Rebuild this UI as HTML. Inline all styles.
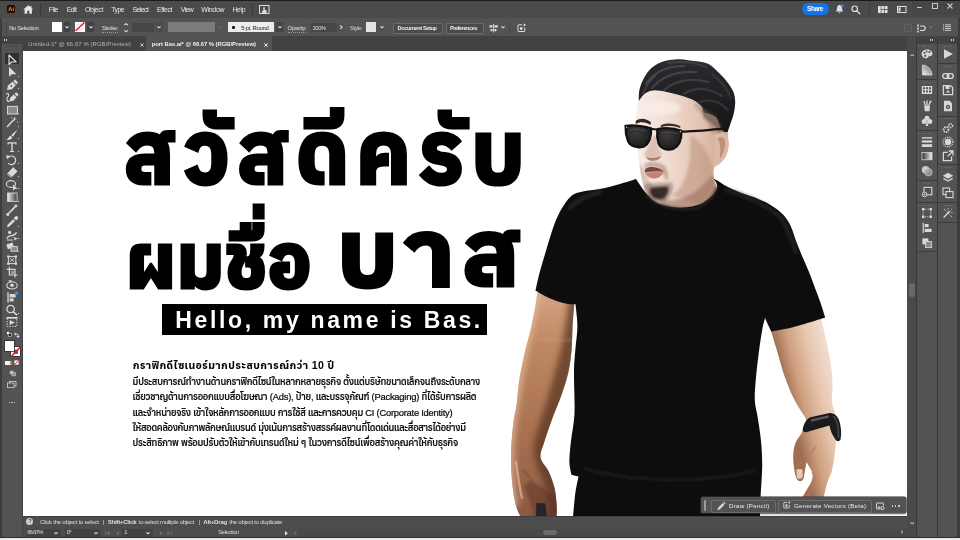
<!DOCTYPE html>
<html lang="th">
<head>
<meta charset="utf-8">
<title>port Bas.ai* @ 66.67 % (RGB/Preview)</title>
<style>
html,body{margin:0;padding:0;background:#535353;}
body{width:960px;height:540px;overflow:hidden;position:relative;font-family:"Liberation Sans","Anuphan","IBM Plex Sans Thai","Noto Sans Thai","Loma",sans-serif;}
#app{position:absolute;left:0;top:0;width:960px;height:540px;overflow:hidden;background:#535353;will-change:transform;}
.abs{position:absolute;}
#menubar{left:0;top:0;width:960px;height:18.4px;background:#4a4a4a;}
#ctrl{left:0;top:18.4px;width:960px;height:18px;background:#535353;}
#tabs{left:0;top:36.4px;width:960px;height:14.6px;background:#424242;}
#tools{left:0;top:37px;width:23px;height:503px;background:#535353;}
#canvas{left:23px;top:51px;width:884px;height:465px;background:#fff;overflow:hidden;}
#status{left:23px;top:516px;width:894px;height:24px;background:#4d4d4d;}
#rpanel{left:907px;top:37px;width:53px;height:503px;background:#4a4a4a;}
.ui{font-family:"Liberation Sans",sans-serif;color:#dcdcdc;white-space:pre;}
.th{font-family:"Liberation Sans","Anuphan","IBM Plex Sans Thai","Noto Sans Thai","Loma",sans-serif;color:#000;white-space:nowrap;}
.bd{font-size:9.4px;line-height:15px;font-weight:500;color:#0a0a0a;-webkit-text-stroke:0.22px #0a0a0a;}
.h1{font-weight:700;-webkit-text-stroke:3px #000;}
svg{display:block;overflow:visible;}
</style>
</head>
<body>
<div id="app">
<div id="menubar" class="abs">
<div class="abs" style="left:0px;top:0px;width:960px;height:1.3px;background:#1c1c1c;"></div>
<div class="abs" style="left:7px;top:5.3px;width:8.3px;height:7.6px;background:#2b0a02;border-radius:1.5px;"></div>
<div class="abs ui" style="left:8.3px;top:5.7px;font-size:5.6px;line-height:7.0px;font-weight:700;color:#ff9a1f;letter-spacing:0.106px;">Ai</div>
<svg class="abs" style="left:22.5px;top:4.6px;" width="10.5" height="9" viewBox="0 0 21 18"><path fill="#e6e6e6" d="M10.5,0.5 L0.5,9 H3.2 V17.5 H8.4 V11.5 H12.6 V17.5 H17.8 V9 H20.5 L17,6 V1.8 H14.6 V4 Z"/></svg>
<div class="abs" style="left:40px;top:3px;width:1px;height:12px;background:#3a3a3a;"></div>
<div class="abs ui" style="left:48.8px;top:5.7px;font-size:6.9px;line-height:8.62px;font-weight:400;color:#e8e8e8;letter-spacing:-0.536px;">File</div>
<div class="abs ui" style="left:66.7px;top:5.7px;font-size:6.9px;line-height:8.62px;font-weight:400;color:#e8e8e8;letter-spacing:-0.525px;">Edit</div>
<div class="abs ui" style="left:85.0px;top:5.7px;font-size:6.9px;line-height:8.62px;font-weight:400;color:#e8e8e8;letter-spacing:-0.324px;">Object</div>
<div class="abs ui" style="left:111.3px;top:5.7px;font-size:6.9px;line-height:8.62px;font-weight:400;color:#e8e8e8;letter-spacing:-0.518px;">Type</div>
<div class="abs ui" style="left:132.5px;top:5.7px;font-size:6.9px;line-height:8.62px;font-weight:400;color:#e8e8e8;letter-spacing:-0.571px;">Select</div>
<div class="abs ui" style="left:157.0px;top:5.7px;font-size:6.9px;line-height:8.62px;font-weight:400;color:#e8e8e8;letter-spacing:-0.4px;">Effect</div>
<div class="abs ui" style="left:180.8px;top:5.7px;font-size:6.9px;line-height:8.62px;font-weight:400;color:#e8e8e8;letter-spacing:-0.604px;">View</div>
<div class="abs ui" style="left:201.3px;top:5.7px;font-size:6.9px;line-height:8.62px;font-weight:400;color:#e8e8e8;letter-spacing:-0.263px;">Window</div>
<div class="abs ui" style="left:232.5px;top:5.7px;font-size:6.9px;line-height:8.62px;font-weight:400;color:#e8e8e8;letter-spacing:-0.391px;">Help</div>
<div class="abs" style="left:251.7px;top:3px;width:1px;height:12px;background:#3a3a3a;"></div>
<svg class="abs" style="left:259.0px;top:4.6px;" width="10.5" height="9" viewBox="0 0 21 18"><rect x="1" y="1" width="19" height="16" fill="none" stroke="#dcdcdc" stroke-width="2"/><path fill="#dcdcdc" d="M8.5,4.5 h3 v5 l3.5,1 v7 h-7.5 l-2.5,-5.5 l3.5,-0.5 z"/></svg>
<div class="abs" style="left:802px;top:2.8px;width:27px;height:12.6px;background:#1473e6;border-radius:6.5px;"></div>
<div class="abs ui" style="left:807.0px;top:5.1px;font-size:6.6px;line-height:8.25px;font-weight:700;color:#ffffff;letter-spacing:-0.482px;">Share</div>
<svg class="abs" style="left:834.5px;top:4.0px;" width="9" height="10" viewBox="0 0 18 20"><path fill="#e0e0e0" d="M9,2 C5,2 4,6 4,9 C4,12 2.5,13.5 1.5,15 H16.5 C15.5,13.5 14,12 14,9 C14,6 13,2 9,2 Z M7,16.5 h4 a2,2 0 0 1 -4,0 z"/><circle cx="14.5" cy="3.5" r="3" fill="#2d8ceb"/></svg>
<svg class="abs" style="left:850.5px;top:4.5px;" width="9.5" height="9.5" viewBox="0 0 19 19"><circle cx="7.5" cy="7.5" r="5.5" fill="none" stroke="#e0e0e0" stroke-width="2.4"/><path d="M11.5,11.5 L17.5,17.5" stroke="#e0e0e0" stroke-width="2.6" stroke-linecap="round"/></svg>
<div class="abs" style="left:868.5px;top:3px;width:1px;height:12px;background:#3e3e3e;"></div>
<svg class="abs" style="left:878.0px;top:5.7px;" width="9.5" height="7" viewBox="0 0 19 14"><rect x="0" y="0" width="5.5" height="14" fill="#e0e0e0"/><rect x="6.8" y="0" width="5.5" height="6.3" fill="#e0e0e0"/><rect x="6.8" y="7.7" width="5.5" height="6.3" fill="#e0e0e0"/><rect x="13.5" y="0" width="5.5" height="6.3" fill="#e0e0e0"/><rect x="13.5" y="7.7" width="5.5" height="6.3" fill="#e0e0e0"/></svg>
<svg class="abs" style="left:897.0px;top:5.7px;" width="9.5" height="7" viewBox="0 0 19 14"><rect x="1" y="1" width="17" height="12" fill="none" stroke="#e0e0e0" stroke-width="2"/><rect x="3" y="3" width="4" height="8" fill="#e0e0e0"/></svg>
<div class="abs" style="left:912px;top:1px;width:48px;height:14px;background:#464646;"></div>
<div class="abs" style="left:916.5px;top:7px;width:5px;height:1.2px;background:#c8c8c8;"></div>
<div class="abs" style="left:931.5px;top:3.4px;width:4.6px;height:3.8px;border:1.1px solid #c8c8c8;"></div>
<svg class="abs" style="left:946.5px;top:3.2px;" width="6" height="6" viewBox="0 0 12 12"><path d="M1,1 L11,11 M11,1 L1,11" stroke="#c8c8c8" stroke-width="2.2"/></svg>
</div>
<div id="ctrl" class="abs"><div class="abs" style="left:0;top:0.6px;">
<div class="abs" style="left:0px;top:-0.6px;width:2px;height:18.6px;background:#3c3c3c;"></div>
<div class="abs" style="left:958px;top:-0.6px;width:2px;height:18.6px;background:#3c3c3c;"></div>
<div class="abs" style="left:5.5px;top:3.5px;width:1px;height:11px;border-left:1px dotted #3a3a3a;"></div>
<div class="abs ui" style="left:9.2px;top:6.0px;font-size:5.9px;line-height:7.38px;font-weight:400;color:#e0e0e0;letter-spacing:-0.355px;">No Selection</div>
<div class="abs" style="left:52px;top:3.5px;width:10px;height:9.5px;background:#ffffff;"></div>
<div class="abs" style="left:63.7px;top:3.5px;width:6.6px;height:9.5px;background:#434343;"></div>
<svg class="abs" style="left:65.0px;top:6.7px;" width="4" height="2.4" viewBox="0 0 4 2.4"><path d="M0.4,0.4 L2.0,1.7999999999999998 L3.6,0.4" fill="none" stroke="#e0e0e0" stroke-width="1.1"/></svg>
<div class="abs" style="left:75.3px;top:3.5px;width:10px;height:9.5px;background:#ffffff;"></div>
<svg class="abs" style="left:75.3px;top:3.5px" width="10" height="9.5" viewBox="0 0 10 9.5"><rect x="2.2" y="2.2" width="5.6" height="5.1" fill="none" stroke="#d8d8d8" stroke-width="0.8"/><path d="M0.6,9 L9.4,0.5" stroke="#e0202a" stroke-width="1.5"/></svg>
<div class="abs" style="left:87.3px;top:3.5px;width:6.6px;height:9.5px;background:#434343;"></div>
<svg class="abs" style="left:88.6px;top:6.7px;" width="4" height="2.4" viewBox="0 0 4 2.4"><path d="M0.4,0.4 L2.0,1.7999999999999998 L3.6,0.4" fill="none" stroke="#e0e0e0" stroke-width="1.1"/></svg>
<div class="abs ui" style="left:102.0px;top:6.0px;font-size:5.9px;line-height:7.38px;font-weight:400;color:#e0e0e0;letter-spacing:-0.395px;border-bottom:0.6px dotted #9a9a9a;line-height:7px;margin-top:0.3px;">Stroke:</div>
<svg class="abs" style="left:124.3px;top:3.8px;" width="4.2" height="2.4" viewBox="0 0 4.2 2.4"><path d="M0.4,2.0 L2.1,0.6 L3.8000000000000003,2.0" fill="none" stroke="#e0e0e0" stroke-width="1.1"/></svg>
<svg class="abs" style="left:124.3px;top:10.6px;" width="4.2" height="2.4" viewBox="0 0 4.2 2.4"><path d="M0.4,0.4 L2.1,1.7999999999999998 L3.8000000000000003,0.4" fill="none" stroke="#e0e0e0" stroke-width="1.1"/></svg>
<div class="abs" style="left:131.7px;top:4.3px;width:22.5px;height:8.4px;background:#464646;"></div>
<div class="abs" style="left:155.8px;top:3.5px;width:7.5px;height:9.5px;background:#4b4b4b;"></div>
<svg class="abs" style="left:157.4px;top:6.9px;" width="4" height="2.4" viewBox="0 0 4 2.4"><path d="M0.4,0.4 L2.0,1.7999999999999998 L3.6,0.4" fill="none" stroke="#e0e0e0" stroke-width="1.1"/></svg>
<div class="abs" style="left:167.5px;top:3.5px;width:47.5px;height:10px;background:#7b7b7b;"></div>
<svg class="abs" style="left:218.3px;top:6.9px;" width="4" height="2.4" viewBox="0 0 4 2.4"><path d="M0.4,0.4 L2.0,1.7999999999999998 L3.6,0.4" fill="none" stroke="#6a6a6a" stroke-width="1.1"/></svg>
<div class="abs" style="left:228.3px;top:3.5px;width:46px;height:10px;background:#ebebeb;"></div>
<div class="abs" style="left:232.3px;top:7.3px;width:2.4px;height:2.4px;background:#111;border-radius:50%;"></div>
<div class="abs ui" style="left:241.3px;top:6.3px;font-size:5.9px;line-height:7.38px;font-weight:400;color:#1a1a1a;letter-spacing:-0.307px;">5 pt. Round</div>
<div class="abs" style="left:276.3px;top:3.5px;width:6.6px;height:9.5px;background:#434343;"></div>
<svg class="abs" style="left:277.6px;top:6.9px;" width="4" height="2.4" viewBox="0 0 4 2.4"><path d="M0.4,0.4 L2.0,1.7999999999999998 L3.6,0.4" fill="none" stroke="#e0e0e0" stroke-width="1.1"/></svg>
<div class="abs ui" style="left:287.5px;top:6.0px;font-size:5.9px;line-height:7.38px;font-weight:400;color:#e0e0e0;letter-spacing:-0.344px;border-bottom:0.6px dotted #9a9a9a;line-height:7px;margin-top:0.3px;">Opacity:</div>
<div class="abs" style="left:310.5px;top:4.3px;width:26px;height:8.4px;background:#464646;"></div>
<div class="abs ui" style="left:312.5px;top:5.8px;font-size:5.7px;line-height:7.12px;font-weight:400;color:#e0e0e0;letter-spacing:-0.349px;">100%</div>
<svg class="abs" style="left:340.0px;top:6.4px;" width="2.6" height="4.4" viewBox="0 0 2.6 4.4"><path d="M0.4,0.4 L2.0,2.2 L0.4,4.0" fill="none" stroke="#e0e0e0" stroke-width="1.1"/></svg>
<div class="abs ui" style="left:350.0px;top:5.6px;font-size:5.9px;line-height:7.38px;font-weight:400;color:#d8d8d8;letter-spacing:-0.447px;">Style:</div>
<div class="abs" style="left:366.3px;top:3.5px;width:10px;height:9.5px;background:#e4e4e4;"></div>
<svg class="abs" style="left:379.8px;top:6.9px;" width="4" height="2.4" viewBox="0 0 4 2.4"><path d="M0.4,0.4 L2.0,1.7999999999999998 L3.6,0.4" fill="none" stroke="#e0e0e0" stroke-width="1.1"/></svg>
<div class="abs" style="left:393px;top:4px;width:47.5px;height:8.6px;border:0.7px solid #6b6b6b;background:#4b4b4b;border-radius:1px;"></div>
<div class="abs ui" style="left:397.5px;top:5.9px;font-size:5.6px;line-height:7.0px;font-weight:700;color:#ececec;letter-spacing:-0.381px;">Document Setup</div>
<div class="abs" style="left:445.5px;top:4px;width:36.5px;height:8.6px;border:0.7px solid #6b6b6b;background:#4b4b4b;border-radius:1px;"></div>
<div class="abs ui" style="left:450.0px;top:5.9px;font-size:5.6px;line-height:7.0px;font-weight:700;color:#ececec;letter-spacing:-0.453px;">Preferences</div>
<svg class="abs" style="left:489.0px;top:4.6px;" width="9" height="8.5" viewBox="0 0 18 17"><rect x="8" y="0" width="1.6" height="17" fill="#e0e0e0"/><rect x="1" y="2.5" width="6" height="4.5" fill="#e0e0e0"/><rect x="10.6" y="2.5" width="7" height="4.5" fill="#e0e0e0"/><rect x="3" y="10" width="4" height="4.5" fill="#e0e0e0"/><rect x="10.6" y="10" width="4" height="4.5" fill="#e0e0e0"/></svg>
<svg class="abs" style="left:500.5px;top:7.2px;" width="4" height="2.4" viewBox="0 0 4 2.4"><path d="M0.4,0.4 L2.0,1.7999999999999998 L3.6,0.4" fill="none" stroke="#e0e0e0" stroke-width="1.1"/></svg>
<div class="abs" style="left:508.7px;top:3px;width:1px;height:12px;background:#444;"></div>
<svg class="abs" style="left:517.0px;top:4.0px;" width="9.5" height="9.5" viewBox="0 0 19 19"><path d="M10,3.5 H3.5 a1.5,1.5 0 0 0 -1.5,1.5 V15.5 a1.5,1.5 0 0 0 1.5,1.5 H14 a1.5,1.5 0 0 0 1.5,-1.5 V9.5" fill="none" stroke="#e0e0e0" stroke-width="2"/><rect x="6" y="8.5" width="5" height="5" fill="#e0e0e0"/><path d="M15,0 L16.1,2.9 L19,4 L16.1,5.1 L15,8 L13.9,5.1 L11,4 L13.9,2.9 Z" fill="#e0e0e0"/></svg>
<svg class="abs" style="left:903.5px;top:5.2px;" width="8" height="8" viewBox="0 0 16 16"><rect x="1.5" y="1.5" width="13" height="13" fill="none" stroke="#747474" stroke-width="2" stroke-dasharray="3 3"/></svg>
<svg class="abs" style="left:916.5px;top:4.6px;" width="9" height="9" viewBox="0 0 18 18"><rect x="0.5" y="1" width="3" height="4" fill="#e0e0e0"/><rect x="0.5" y="7" width="3" height="4" fill="#e0e0e0"/><rect x="0.5" y="13" width="3" height="4" fill="#e0e0e0"/><path d="M6,4 H12 a4.5,4.5 0 0 1 0,9 H6" fill="none" stroke="#e0e0e0" stroke-width="2.4"/></svg>
<svg class="abs" style="left:929.3px;top:7.3px;" width="3.6" height="2.2" viewBox="0 0 3.6 2.2"><path d="M0.4,0.4 L1.8,1.6 L3.2,0.4" fill="none" stroke="#7a7a7a" stroke-width="1.1"/></svg>
<svg class="abs" style="left:942.5px;top:5.5px;" width="8" height="7" viewBox="0 0 16 14"><rect x="0" y="0.5" width="2.2" height="2.2" fill="#bdbdbd"/><rect x="4" y="0.5" width="12" height="2.2" fill="#bdbdbd"/><rect x="0" y="4.2" width="2.2" height="2.2" fill="#bdbdbd"/><rect x="4" y="4.2" width="12" height="2.2" fill="#bdbdbd"/><rect x="0" y="7.9" width="2.2" height="2.2" fill="#bdbdbd"/><rect x="4" y="7.9" width="12" height="2.2" fill="#bdbdbd"/><rect x="0" y="11.6" width="2.2" height="2.2" fill="#bdbdbd"/><rect x="4" y="11.6" width="12" height="2.2" fill="#bdbdbd"/></svg>
</div></div>
<div id="tabs" class="abs"><div class="abs" style="left:0;top:0.6px;">
<div class="abs" style="left:0px;top:-0.6px;width:2px;height:15px;background:#3c3c3c;"></div>
<div class="abs ui" style="left:28.3px;top:4.0px;font-size:5.9px;line-height:7.38px;font-weight:400;color:#b4b4b4;letter-spacing:0.1px;">Untitled-1* @ 66.67 % (RGB/Preview)</div>
<svg class="abs" style="left:139.6px;top:5.7px;" width="4" height="4" viewBox="0 0 12 12"><path d="M1,1 L11,11 M11,1 L1,11" stroke="#c8c8c8" stroke-width="2.8"/></svg>
<div class="abs" style="left:145.7px;top:-0.6px;width:126px;height:15px;background:#535353;"></div>
<div class="abs ui" style="left:151.7px;top:4.0px;font-size:5.9px;line-height:7.38px;font-weight:700;color:#f0f0f0;letter-spacing:-0.047px;">port Bas.ai* @ 66.67 % (RGB/Preview)</div>
<svg class="abs" style="left:264.1px;top:5.7px;" width="4" height="4" viewBox="0 0 12 12"><path d="M1,1 L11,11 M11,1 L1,11" stroke="#f4f4f4" stroke-width="3.0"/></svg>
</div></div>
<div id="tools" class="abs">
<div class="abs" style="left:0px;top:0px;width:2px;height:503px;background:#3c3c3c;"></div>
<div class="abs" style="left:2px;top:0px;width:21px;height:6.5px;background:#424242;"></div>
<div class="abs" style="left:22px;top:0px;width:1px;height:503px;background:#424242;"></div>
<div class="abs" style="left:4.3px;top:2.2px;width:1.2px;height:1.6px;background:#d0d0d0;"></div>
<div class="abs" style="left:6.3px;top:2.2px;width:1.2px;height:1.6px;background:#d0d0d0;"></div>
<div class="abs" style="left:6px;top:8.6px;width:11px;height:0;border-top:1px dotted #3c3c3c;"></div>
<div class="abs" style="left:4.8px;top:16.3px;width:14.6px;height:11.2px;background:#2f2f2f;border-radius:1px;"></div>
<svg class="abs" style="left:5.0px;top:16.6px;" width="14" height="12" viewBox="0 0 14 12"><path d="M4,1 L4,10.5 L6.6,8 L11.2,8 Z" fill="none" stroke="#e4e4e4" stroke-width="1.1" stroke-linejoin="round"/></svg>
<svg class="abs" style="left:5.0px;top:29.1px;" width="14" height="12" viewBox="0 0 14 12"><path d="M4,0.8 L4,10.8 L6.8,8.2 L11.4,8.2 Z" fill="#dadada"/></svg><div class="abs" style="left:18.2px;top:38.7px;width:1.3px;height:1.3px;background:#cfcfcf;"></div>
<svg class="abs" style="left:5.0px;top:41.6px;" width="14" height="12" viewBox="0 0 14 12"><path d="M2,11 L3,6.5 L7.5,2.8 L10.8,6 L7,10.2 Z" fill="#dadada"/><path d="M8.3,2.2 L10.2,0.6 L13,3.4 L11.4,5.3 Z" fill="#dadada"/><circle cx="6.3" cy="7" r="0.9" fill="#535353"/></svg><div class="abs" style="left:18.2px;top:51.2px;width:1.3px;height:1.3px;background:#cfcfcf;"></div>
<svg class="abs" style="left:5.0px;top:54.1px;" width="14" height="12" viewBox="0 0 14 12"><path d="M4.5,10.5 L5.2,6.8 L8.8,3.4 L11.6,6.2 L8.4,9.8 Z" fill="#dadada"/><path d="M9.6,2.8 L11.2,1.2 L13.6,3.6 L12.2,5.4 Z" fill="#dadada"/><path d="M1.2,3 C3.5,1.5 4.5,4 2.8,6 C1.2,8 1.6,10.4 4.4,10.6" fill="none" stroke="#dadada" stroke-width="1.1"/></svg>
<svg class="abs" style="left:5.0px;top:66.6px;" width="14" height="12" viewBox="0 0 14 12"><rect x="2.5" y="2.4" width="10" height="7.6" fill="#8c8c8c" stroke="#d6d6d6" stroke-width="1"/></svg><div class="abs" style="left:18.2px;top:76.2px;width:1.3px;height:1.3px;background:#cfcfcf;"></div>
<svg class="abs" style="left:5.0px;top:79.1px;" width="14" height="12" viewBox="0 0 14 12"><path d="M2,11 L8.5,4" stroke="#dadada" stroke-width="1.5"/><path d="M9.5,0.5 L10.1,2.4 L12,3 L10.1,3.6 L9.5,5.5 L8.9,3.6 L7,3 L8.9,2.4 Z" fill="#dadada"/><rect x="12" y="5.5" width="1" height="1" fill="#dadada"/><rect x="5.8" y="1" width="1" height="1" fill="#dadada"/></svg><div class="abs" style="left:18.2px;top:88.7px;width:1.3px;height:1.3px;background:#cfcfcf;"></div>
<svg class="abs" style="left:5.0px;top:91.6px;" width="14" height="12" viewBox="0 0 14 12"><path d="M12.6,0.6 L6.2,6 L8,7.8 Z" fill="#dadada"/><path d="M5.6,6.8 L7.3,8.5 C6.8,10.6 4,11.4 1.6,10.8 C3.6,10 3.4,7.4 5.6,6.8 Z" fill="#dadada"/></svg><div class="abs" style="left:18.2px;top:101.2px;width:1.3px;height:1.3px;background:#cfcfcf;"></div>
<svg class="abs" style="left:5.0px;top:104.1px;" width="14" height="12" viewBox="0 0 14 12"><path d="M2.5,1.2 H11.5 V3.6 H10.4 V2.5 H7.7 V10 H9 V11 H5 V10 H6.3 V2.5 H3.6 V3.6 H2.5 Z" fill="#dadada"/></svg><div class="abs" style="left:18.2px;top:113.7px;width:1.3px;height:1.3px;background:#cfcfcf;"></div>
<svg class="abs" style="left:5.0px;top:116.6px;" width="14" height="12" viewBox="0 0 14 12"><path d="M3.2,3.4 A4.3,4.3 0 1 1 3,9" fill="none" stroke="#dadada" stroke-width="1.2"/><path d="M1,1.2 L5.4,2 L2.2,5.2 Z" fill="#dadada"/></svg><div class="abs" style="left:18.2px;top:126.2px;width:1.3px;height:1.3px;background:#cfcfcf;"></div>
<svg class="abs" style="left:5.0px;top:129.1px;" width="14" height="12" viewBox="0 0 14 12"><path d="M8.2,1.2 L12.6,5.2 L7,11 L2.6,7 Z" fill="#dadada"/><path d="M2.6,7 L7,11 L5.6,11.6 L1.6,8 Z" fill="#a8a8a8"/></svg><div class="abs" style="left:18.2px;top:138.7px;width:1.3px;height:1.3px;background:#cfcfcf;"></div>
<svg class="abs" style="left:5.0px;top:141.6px;" width="14" height="12" viewBox="0 0 14 12"><ellipse cx="6" cy="5" rx="4.6" ry="3.4" fill="none" stroke="#dadada" stroke-width="1.1"/><path d="M8,5.5 L8,11.6 L9.8,10 L12.6,10 Z" fill="#dadada"/></svg><div class="abs" style="left:18.2px;top:151.2px;width:1.3px;height:1.3px;background:#cfcfcf;"></div>
<svg class="abs" style="left:5.0px;top:154.1px;" width="14" height="12" viewBox="0 0 14 12"><defs><linearGradient id="tg" x1="0" y1="0" x2="1" y2="0"><stop offset="0" stop-color="#f0f0f0"/><stop offset="1" stop-color="#3c3c3c"/></linearGradient></defs><rect x="2.5" y="2" width="9.6" height="8.4" fill="url(#tg)" stroke="#d6d6d6" stroke-width="0.9"/></svg><div class="abs" style="left:18.2px;top:163.7px;width:1.3px;height:1.3px;background:#cfcfcf;"></div>
<svg class="abs" style="left:5.0px;top:166.6px;" width="14" height="12" viewBox="0 0 14 12"><path d="M2.4,10.8 L11.2,1.6" stroke="#dadada" stroke-width="1.6"/><rect x="9.6" y="0.6" width="2.6" height="2.6" fill="#dadada"/><rect x="1.4" y="9.2" width="2.6" height="2.6" fill="#dadada"/><rect x="6" y="5.4" width="1.6" height="1.6" fill="#dadada"/></svg>
<svg class="abs" style="left:5.0px;top:179.1px;" width="14" height="12" viewBox="0 0 14 12"><path d="M2,11.2 L2.6,8.8 L8.2,3.2 L10,5 L4.4,10.6 Z" fill="#dadada"/><path d="M8.6,2 L10.4,0.4 a1.4,1.4 0 0 1 2,0 L12.8,0.8 a1.4,1.4 0 0 1 0,2 L11.2,4.6 Z" fill="#dadada"/></svg><div class="abs" style="left:18.2px;top:188.7px;width:1.3px;height:1.3px;background:#cfcfcf;"></div>
<svg class="abs" style="left:5.0px;top:191.6px;" width="14" height="12" viewBox="0 0 14 12"><path d="M2,9.6 C4,4 7,10 11.6,3.4" fill="none" stroke="#dadada" stroke-width="1.3"/><circle cx="4.6" cy="3.4" r="1.6" fill="#dadada"/><path d="M8.4,8 L12.6,9.2 L10,11.6 Z" fill="#dadada"/><path d="M2,11 H8" stroke="#dadada" stroke-width="1"/></svg><div class="abs" style="left:18.2px;top:201.2px;width:1.3px;height:1.3px;background:#cfcfcf;"></div>
<svg class="abs" style="left:5.0px;top:204.1px;" width="14" height="12" viewBox="0 0 14 12"><rect x="2" y="2.4" width="6.4" height="5" fill="#dadada" transform="rotate(-18 5 5)"/><rect x="6" y="5.6" width="6.4" height="4.6" fill="#8c8c8c" stroke="#dadada" stroke-width="0.9"/></svg><div class="abs" style="left:18.2px;top:213.7px;width:1.3px;height:1.3px;background:#cfcfcf;"></div>
<svg class="abs" style="left:5.0px;top:216.6px;" width="14" height="12" viewBox="0 0 14 12"><rect x="3.4" y="2.6" width="7.4" height="7" fill="none" stroke="#dadada" stroke-width="1"/><rect x="2.2" y="1.4" width="2.2" height="2.2" fill="#dadada"/><rect x="2.2" y="8.6" width="2.2" height="2.2" fill="#dadada"/><rect x="9.8" y="1.4" width="2.2" height="2.2" fill="#dadada"/><rect x="9.8" y="8.6" width="2.2" height="2.2" fill="#dadada"/><path d="M5,4.4 L9,7.8 M9,4.4 L5,7.8" stroke="#dadada" stroke-width="0.8"/></svg>
<svg class="abs" style="left:5.0px;top:229.1px;" width="14" height="12" viewBox="0 0 14 12"><path d="M4.4,0.8 V9 H12.6 M1.6,3.4 H10 V11.6" fill="none" stroke="#dadada" stroke-width="1.2"/><rect x="6" y="5" width="3" height="3" fill="#9a9a9a"/></svg>
<svg class="abs" style="left:5.0px;top:241.6px;" width="14" height="12" viewBox="0 0 14 12"><ellipse cx="7" cy="6.4" rx="5.2" ry="3.6" fill="none" stroke="#dadada" stroke-width="1.1"/><circle cx="7" cy="6.2" r="1.8" fill="#dadada"/><path d="M3.4,1.4 L6.8,1 L5,4 Z" fill="#dadada"/></svg>
<svg class="abs" style="left:5.0px;top:254.1px;" width="14" height="12" viewBox="0 0 14 12"><rect x="2.4" y="1.2" width="1.3" height="10.4" fill="#dadada"/><rect x="4.6" y="3" width="6" height="3.4" fill="#dadada"/><rect x="4.6" y="7.4" width="4" height="3" fill="#dadada"/><circle cx="11.4" cy="2.2" r="1.9" fill="#2d8ceb"/></svg>
<svg class="abs" style="left:5.0px;top:266.6px;" width="14" height="12" viewBox="0 0 14 12"><circle cx="5.6" cy="5" r="3.7" fill="none" stroke="#dadada" stroke-width="1.3"/><path d="M8.4,7.8 L12,11.2" stroke="#dadada" stroke-width="1.6"/></svg><div class="abs" style="left:18.2px;top:276.2px;width:1.3px;height:1.3px;background:#cfcfcf;"></div>
<svg class="abs" style="left:5.0px;top:279.1px;" width="14" height="12" viewBox="0 0 14 12"><rect x="2.2" y="2.4" width="9.6" height="8" fill="none" stroke="#dadada" stroke-width="1" stroke-dasharray="1.4 1.2"/><path d="M4.6,4 L10,6.6 L4.6,9 Z" fill="#dadada"/><rect x="1.4" y="1" width="11.4" height="1.4" fill="#dadada"/></svg>
<svg class="abs" style="left:5.6px;top:294.4px;" width="6" height="6.4" viewBox="0 0 12 13"><rect x="0.6" y="0.6" width="7" height="7" fill="#fff" stroke="#222" stroke-width="1.2"/><rect x="4.4" y="4.6" width="7" height="7" fill="#222" stroke="#e8e8e8" stroke-width="1.2"/></svg>
<svg class="abs" style="left:14.4px;top:294.6px;" width="6" height="6.2" viewBox="0 0 12 12"><path d="M2,4 H8 V10" fill="none" stroke="#e4e4e4" stroke-width="1.6"/><path d="M3.6,0.6 L0,4 L3.6,7.4 Z M4.6,8 L8,12 L11.4,8 Z" fill="#e4e4e4"/></svg>
<div class="abs" style="left:10.6px;top:309.8px;width:9.6px;height:9.6px;background:#fff;box-shadow:0 0 0 0.6px #2c2c2c;"></div>
<svg class="abs" style="left:10.6px;top:309.8px;" width="9.6" height="9.6" viewBox="0 0 9.6 9.6"><rect x="2.7" y="2.7" width="4.2" height="4.2" fill="#535353"/><path d="M0.4,9.2 L9.2,0.4" stroke="#e0202a" stroke-width="1.5"/></svg>
<div class="abs" style="left:4.6px;top:304.4px;width:9.8px;height:9.8px;background:#fff;box-shadow:0 0 0 0.7px #2c2c2c;"></div>
<div class="abs" style="left:5px;top:324.0px;width:3.6px;height:3.6px;background:#f4f4f4;"></div>
<div class="abs" style="left:9.2px;top:324.0px;width:3.6px;height:3.6px;background:linear-gradient(90deg,#f4f4f4,#444);"></div>
<svg class="abs" style="left:14.2px;top:323.4px;" width="5" height="5" viewBox="0 0 10 10"><rect x="0.8" y="0.8" width="8.4" height="8.4" fill="#fff"/><path d="M0.8,9.2 L9.2,0.8" stroke="#e0202a" stroke-width="2"/></svg>
<svg class="abs" style="left:8.6px;top:332.5px;" width="7" height="6.4" viewBox="0 0 14 13"><circle cx="5.4" cy="5.4" r="4.2" fill="#bdbdbd"/><rect x="6.4" y="5.4" width="6.6" height="6.6" fill="#8e8e8e" stroke="#dadada" stroke-width="1"/></svg>
<svg class="abs" style="left:7.4px;top:344.4px;" width="9.4" height="7.2" viewBox="0 0 19 14.4"><rect x="4.8" y="0.8" width="13.4" height="9.4" fill="#535353" stroke="#dadada" stroke-width="1.5"/><rect x="0.8" y="4" width="13.4" height="9.4" fill="#535353" stroke="#dadada" stroke-width="1.5"/></svg>
<div class="abs" style="left:8.6px;top:364.6px;width:1.4px;height:1.4px;background:#cfcfcf;border-radius:50%;"></div>
<div class="abs" style="left:11.3px;top:364.6px;width:1.4px;height:1.4px;background:#cfcfcf;border-radius:50%;"></div>
<div class="abs" style="left:14px;top:364.6px;width:1.4px;height:1.4px;background:#cfcfcf;border-radius:50%;"></div>
</div>
<div id="canvas" class="abs">
<svg class="abs" id="man" style="left:0;top:0;" width="884" height="465" viewBox="23 51 884 465">
<defs>
<linearGradient id="gFace" x1="0" y1="0" x2="1" y2="0"><stop offset="0" stop-color="#f8efea"/><stop offset="0.35" stop-color="#f0dcd0"/><stop offset="0.7" stop-color="#e2c3b2"/><stop offset="1" stop-color="#cca48e"/></linearGradient>
<linearGradient id="gNeck" x1="0" y1="0" x2="0" y2="1"><stop offset="0" stop-color="#b98d76" stop-opacity="0"/><stop offset="1" stop-color="#b98d76" stop-opacity="0.75"/></linearGradient>
<linearGradient id="gArmL" gradientUnits="userSpaceOnUse" x1="0" y1="295" x2="0" y2="516"><stop offset="0" stop-color="#d4a282"/><stop offset="0.22" stop-color="#bf8864"/><stop offset="0.6" stop-color="#aa7252"/><stop offset="1" stop-color="#8c5a42"/></linearGradient>
<linearGradient id="gArmR" gradientUnits="userSpaceOnUse" x1="0" y1="0" x2="50" y2="0" gradientTransform="translate(771 330) rotate(-14)"><stop offset="0" stop-color="#a06f52"/><stop offset="0.28" stop-color="#cf9f80"/><stop offset="0.65" stop-color="#e6c6ae"/><stop offset="1" stop-color="#f2dccf"/></linearGradient>
<linearGradient id="gHair" x1="0" y1="0" x2="0" y2="1"><stop offset="0" stop-color="#2c2c30"/><stop offset="1" stop-color="#141416"/></linearGradient>
<radialGradient id="gLens" cx="0.4" cy="0.35" r="0.8"><stop offset="0" stop-color="#3a3a3d"/><stop offset="1" stop-color="#161618"/></radialGradient>
<filter id="fb1" x="-30%" y="-30%" width="160%" height="160%"><feGaussianBlur stdDeviation="1.6"/></filter>
<filter id="fb2" x="-30%" y="-30%" width="160%" height="160%"><feGaussianBlur stdDeviation="0.8"/></filter>
<clipPath id="cArmL"><path d="M538.0,288.0 C537.6,290.8 536.7,298.3 535.5,305.0 C534.3,311.7 532.9,319.5 531.0,328.0 C529.1,336.5 526.0,347.0 524.0,356.0 C522.0,365.0 520.2,373.8 519.0,382.0 C517.8,390.2 517.4,398.7 516.5,405.0 C515.6,411.3 514.6,414.0 513.8,420.0 C513.0,426.0 512.1,433.7 511.6,441.0 C511.1,448.3 510.8,456.2 511.0,464.0 C511.2,471.8 511.9,480.6 512.7,487.6 C513.5,494.6 514.6,500.9 516.0,506.0 C517.4,511.1 520.2,516.0 521.0,518.0 C526.9,518.0 550.6,518.0 556.5,518.0 C556.5,516.0 557.1,511.1 556.7,506.0 C556.4,500.9 555.8,493.4 554.4,487.6 C553.0,481.8 550.9,476.4 548.6,471.4 C546.3,466.4 541.2,462.5 540.5,457.5 C539.8,452.5 542.5,447.9 544.5,441.3 C546.5,434.7 549.7,425.7 552.5,418.0 C555.3,410.3 558.9,402.5 561.5,395.0 C564.1,387.5 566.5,380.6 568.2,373.0 C569.9,365.4 570.9,357.2 571.6,349.4 C572.3,341.6 572.1,334.2 572.6,326.0 C573.1,317.8 574.2,304.3 574.5,300.0 C568.4,298.0 544.1,290.0 538.0,288.0 Z"/></clipPath>
<filter id="fb3" x="-50%" y="-20%" width="200%" height="140%"><feGaussianBlur stdDeviation="3.2"/></filter>
<clipPath id="cFace"><path d="M639.0,100.0 C637.5,103.8 636.9,108.8 636.3,113.0 C635.7,117.2 635.5,120.5 635.6,125.0 C635.7,129.5 636.2,135.5 636.6,140.0 C637.0,144.5 637.5,147.8 638.0,152.0 C638.5,156.2 639.0,160.7 639.6,165.0 C640.2,169.3 640.6,174.2 641.4,178.0 C642.2,181.8 643.1,184.8 644.5,188.0 C645.9,191.2 647.8,194.3 649.5,197.0 C651.2,199.7 653.2,201.2 655.0,204.0 C656.8,206.8 659.2,212.3 660.0,214.0 C667.3,214.0 696.7,214.0 704.0,214.0 C706.1,210.0 714.7,195.3 716.5,190.0 C718.3,184.7 715.3,184.5 714.8,182.0 C714.3,179.5 713.6,177.7 713.6,175.0 C713.6,172.3 713.9,168.0 715.0,166.0 C716.1,164.0 718.8,164.7 720.5,163.0 C722.2,161.3 724.2,158.7 725.5,156.0 C726.8,153.3 727.9,149.7 728.3,146.7 C728.7,143.7 728.2,141.1 728.0,138.0 C727.8,134.9 728.3,133.0 727.0,128.0 C725.7,123.0 724.5,113.3 720.0,108.0 C715.5,102.7 706.7,99.3 700.0,96.0 C693.3,92.7 686.7,89.8 680.0,88.0 C673.3,86.2 665.8,84.7 660.0,85.0 C654.2,85.3 648.5,87.5 645.0,90.0 C641.5,92.5 640.5,96.2 639.0,100.0 Z"/></clipPath>
</defs>
<path id="armL" fill="url(#gArmL)" d="M538.0,288.0 C537.6,290.8 536.7,298.3 535.5,305.0 C534.3,311.7 532.9,319.5 531.0,328.0 C529.1,336.5 526.0,347.0 524.0,356.0 C522.0,365.0 520.2,373.8 519.0,382.0 C517.8,390.2 517.4,398.7 516.5,405.0 C515.6,411.3 514.6,414.0 513.8,420.0 C513.0,426.0 512.1,433.7 511.6,441.0 C511.1,448.3 510.8,456.2 511.0,464.0 C511.2,471.8 511.9,480.6 512.7,487.6 C513.5,494.6 514.6,500.9 516.0,506.0 C517.4,511.1 520.2,516.0 521.0,518.0 C526.9,518.0 550.6,518.0 556.5,518.0 C556.5,516.0 557.1,511.1 556.7,506.0 C556.4,500.9 555.8,493.4 554.4,487.6 C553.0,481.8 550.9,476.4 548.6,471.4 C546.3,466.4 541.2,462.5 540.5,457.5 C539.8,452.5 542.5,447.9 544.5,441.3 C546.5,434.7 549.7,425.7 552.5,418.0 C555.3,410.3 558.9,402.5 561.5,395.0 C564.1,387.5 566.5,380.6 568.2,373.0 C569.9,365.4 570.9,357.2 571.6,349.4 C572.3,341.6 572.1,334.2 572.6,326.0 C573.1,317.8 574.2,304.3 574.5,300.0 C568.4,298.0 544.1,290.0 538.0,288.0 Z"/>
<g clip-path="url(#cArmL)">
<path filter="url(#fb3)" d="M577,300 C574,330 570,352 563,374 C559,392 552,412 545,434 C541,446 541,456 548,470 C554,484 557,500 557,520" fill="none" stroke="#5a3424" stroke-opacity="0.75" stroke-width="17"/>
<path filter="url(#fb3)" d="M536,292 C533,315 527,340 521,368 C517,392 513,418 511,442 C510,462 511,486 515,506" fill="none" stroke="#efc6a8" stroke-opacity="0.7" stroke-width="7"/>
<path filter="url(#fb1)" d="M538,338 C548,341 560,342 572,340" fill="none" stroke="#e6b999" stroke-opacity="0.3" stroke-width="2"/>
<path filter="url(#fb1)" d="M524,486 C528,496 532,506 534,518 L556,518 L556,498 C550,492 540,486 530,480 Z" fill="#5a3424" fill-opacity="0.5"/>
</g>
<path fill="#26262a" d="M536.4,503 L545.6,503.6 L547,518 L536,518 Z"/>
<path d="M522,470 C528,474 534,482 537,494" fill="none" stroke="#7c4f3a" stroke-opacity="0.55" stroke-width="1.6" stroke-linecap="round"/>
<path d="M516,462 C518,474 519,486 522,498" fill="none" stroke="#e8c1a6" stroke-opacity="0.6" stroke-width="2.4" stroke-linecap="round"/>
<path id="armR" fill="url(#gArmR)" d="M768.0,318.0 C768.7,320.7 770.4,328.2 772.0,334.0 C773.6,339.8 775.3,345.2 777.5,352.5 C779.7,359.8 782.3,369.9 785.0,377.5 C787.7,385.1 790.8,392.4 793.5,398.0 C796.2,403.6 798.9,407.3 801.0,411.0 C803.1,414.7 805.7,416.8 806.0,420.0 C806.3,423.2 804.7,426.7 803.0,430.5 C801.3,434.3 797.3,438.7 795.7,442.6 C794.1,446.5 793.6,450.0 793.3,453.7 C793.0,457.4 793.3,461.3 793.7,465.0 C794.1,468.7 794.8,473.4 795.6,476.0 C796.4,478.6 797.4,480.2 798.6,480.8 C799.8,481.4 801.9,481.3 803.0,479.6 C804.1,477.9 804.4,473.3 805.0,470.4 C805.6,467.5 806.2,463.4 806.4,462.0 C807.4,463.8 811.6,469.8 812.4,473.0 C813.2,476.2 812.5,478.5 811.4,481.5 C810.3,484.5 807.7,487.9 806.0,491.0 C804.3,494.1 802.1,497.5 801.0,500.0 C799.9,502.5 799.8,505.0 799.5,506.0 C803.2,506.0 817.8,506.0 821.5,506.0 C822.5,502.2 825.5,489.2 827.2,483.3 C828.9,477.4 830.7,475.0 831.9,470.4 C833.1,465.8 833.9,460.7 834.6,455.6 C835.3,450.5 835.5,445.1 836.0,440.0 C836.5,434.9 837.6,429.3 837.5,425.0 C837.4,420.7 836.6,417.8 835.6,414.0 C834.6,410.2 832.3,406.8 831.8,402.0 C831.3,397.2 832.6,391.2 832.5,385.0 C832.4,378.8 832.0,372.2 831.0,365.0 C830.0,357.8 828.2,349.8 826.5,342.0 C824.8,334.2 821.9,322.0 821.0,318.0 C812.2,318.0 776.8,318.0 768.0,318.0 Z"/>
<path d="M806.4,462 C809,456 812,451 816,447" fill="none" stroke="#a97a60" stroke-opacity="0.7" stroke-width="1.6" stroke-linecap="round"/>
<path d="M812.4,473 C816,478 815,486 808,495" fill="none" stroke="#b08268" stroke-opacity="0.55" stroke-width="2" stroke-linecap="round"/>
<path fill="#f3ddd3" fill-opacity="0.8" d="M796.4,470 C797.6,468.6 801.4,468.6 802.6,470 L802.8,476.5 C801.6,479.4 798.2,479.6 796.8,477.2 Z"/>
<path fill="#1b1b1d" d="M802.6,431 C803,425 806,419 810.5,417.2 L829.5,413 C833,412.6 836.5,414.6 838.6,419 C841,425 841.8,433 840.6,439.2 C839.6,441.6 836.8,441.8 835.4,439.6 C832.6,435.6 830.4,430.6 829.4,425.6 L808.6,431.6 C806.4,432.4 804,432.4 802.6,431 Z"/>
<path d="M812,420.4 L828,416.6" stroke="#5a5a5e" stroke-width="2.2" stroke-linecap="round" fill="none"/>
<path d="M834,416.5 C837.4,421 839,430 838.4,437.4" stroke="#4a4a4e" stroke-width="1.5" fill="none" stroke-linecap="round"/>
<path id="face" fill="url(#gFace)" d="M639.0,100.0 C637.5,103.8 636.9,108.8 636.3,113.0 C635.7,117.2 635.5,120.5 635.6,125.0 C635.7,129.5 636.2,135.5 636.6,140.0 C637.0,144.5 637.5,147.8 638.0,152.0 C638.5,156.2 639.0,160.7 639.6,165.0 C640.2,169.3 640.6,174.2 641.4,178.0 C642.2,181.8 643.1,184.8 644.5,188.0 C645.9,191.2 647.8,194.3 649.5,197.0 C651.2,199.7 653.2,201.2 655.0,204.0 C656.8,206.8 659.2,212.3 660.0,214.0 C667.3,214.0 696.7,214.0 704.0,214.0 C706.1,210.0 714.7,195.3 716.5,190.0 C718.3,184.7 715.3,184.5 714.8,182.0 C714.3,179.5 713.6,177.7 713.6,175.0 C713.6,172.3 713.9,168.0 715.0,166.0 C716.1,164.0 718.8,164.7 720.5,163.0 C722.2,161.3 724.2,158.7 725.5,156.0 C726.8,153.3 727.9,149.7 728.3,146.7 C728.7,143.7 728.2,141.1 728.0,138.0 C727.8,134.9 728.3,133.0 727.0,128.0 C725.7,123.0 724.5,113.3 720.0,108.0 C715.5,102.7 706.7,99.3 700.0,96.0 C693.3,92.7 686.7,89.8 680.0,88.0 C673.3,86.2 665.8,84.7 660.0,85.0 C654.2,85.3 648.5,87.5 645.0,90.0 C641.5,92.5 640.5,96.2 639.0,100.0 Z"/>
<path id="hair" fill="url(#gHair)" d="M638.8,101.0 C638.9,99.2 638.6,93.7 639.4,90.0 C640.2,86.3 641.7,82.4 643.6,78.8 C645.5,75.2 648.0,71.4 651.0,68.6 C654.0,65.8 657.7,63.5 661.7,62.0 C665.7,60.5 670.3,59.7 675.0,59.4 C679.7,59.1 684.7,59.8 690.0,60.4 C695.3,61.0 702.1,61.4 706.7,63.3 C711.3,65.1 714.1,68.4 717.5,71.5 C720.9,74.6 724.4,78.3 727.0,81.7 C729.6,85.1 731.9,88.4 733.3,91.7 C734.7,95.0 735.1,98.1 735.2,101.7 C735.3,105.3 734.6,109.7 733.8,113.3 C733.0,116.9 731.6,120.2 730.6,123.3 C729.6,126.4 728.1,130.6 727.6,132.0 C726.9,131.9 724.7,132.3 723.5,131.5 C722.3,130.7 721.5,129.2 720.3,127.0 C719.1,124.8 718.2,120.2 716.5,118.0 C714.8,115.8 712.1,114.9 710.0,114.0 C707.9,113.1 704.7,112.7 703.6,112.4 C703.3,111.5 703.4,108.8 701.7,106.7 C700.0,104.6 696.9,101.9 693.3,100.0 C689.7,98.1 684.4,96.5 680.0,95.2 C675.6,93.9 671.2,92.7 666.7,91.9 C662.2,91.1 656.9,90.1 653.3,90.4 C649.7,90.7 647.4,91.7 645.0,93.5 C642.6,95.3 639.8,99.8 638.8,101.0 Z"/>
<path filter="url(#fb2)" fill="#4a3c38" fill-opacity="0.6" d="M701.5,107 C706,110 712,112 717,117 C720,122 722,127 724,131.5 L719,133 C716,128 711,122 704,118 Z"/>
<path filter="url(#fb1)" fill="#8a6d60" fill-opacity="0.4" d="M696,102 C703,108 712,116 718,132 L712,134 C708,122 702,112 694,106 Z"/>
<path filter="url(#fb1)" clip-path="url(#cFace)" fill="#b88e78" fill-opacity="0.5" d="M690,135 C700,140 708,150 712,165 C713,172 713,178 715,184 L700,204 L672,196 C684,186 692,170 690,135 Z"/>
<path filter="url(#fb1)" clip-path="url(#cFace)" fill="#9c705b" fill-opacity="0.6" d="M660,198 C672,203 690,198 702,186 C708,180 711,176 713.5,175 L716.5,190 L704,214 L662,214 Z"/>
<path fill="#dcb9a4" d="M714.5,136 C719,131.5 726,131 728,137 C729.5,144 728.5,152 725,158 C722,162.5 718,165.5 714.6,166.5 Z"/>
<path fill="#a8785f" fill-opacity="0.6" d="M717.5,139 C721,136 725,137 725.3,142 C725.4,148 723.5,154 720,158.5 C719.5,153 722,146 717.5,139 Z"/>
<path filter="url(#fb1)" clip-path="url(#cFace)" fill="#9a7464" fill-opacity="0.32" d="M636.3,160 C638,172 641,184 647,194 C652,200 660,203 668,200 C660,196 650,186 645,170 Z"/>
<path filter="url(#fb1)" fill="#6b4c40" fill-opacity="0.45" d="M644,184.5 C650,182.6 662,183.4 672,182.6 C674,188 672,196 666,200.6 C659,203 650.6,200.6 647,195.6 C644.8,192 643.6,188 644,184.5 Z"/><path filter="url(#fb2)" fill="#241a17" fill-opacity="0.85" d="M650,188.4 C655,187 662,187.2 668,186.6 C669,191 667.4,195.6 663.6,198.4 C659,200 654,199 651.6,195.6 C650.4,193.4 649.8,190.8 650,188.4 Z"/>
<path filter="url(#fb2)" fill="#8a5e4e" fill-opacity="0.4" d="M644.5,163.8 C650,161 658,161.5 664.5,165.5 C667.5,169 668.6,175 668,181 L664.4,178 C663.5,173 661,168.5 655,167 C650.5,166.5 647,167.5 645,170 Z"/>
<path fill="#7d463f" d="M645,169 C649,166.2 654,166.6 658,168 C660.4,168.8 662.6,170.4 664,172 C658,171.4 651,171.4 645,172.4 Z"/>
<path fill="#c48279" d="M645.4,172.8 C651,171.8 658,171.8 663.6,172.4 C661.6,176.6 657,178.8 652.4,178.4 C649,178 646.6,176 645.4,172.8 Z"/>
<path filter="url(#fb2)" fill="#c59e89" fill-opacity="0.5" d="M652,136 C650.6,143 646,149 644.4,154.5 C644.6,158.8 650,160.6 656,159.6 C660.4,158.6 662.4,155.6 661,152 C658,148 656.6,142 657.4,136 Z"/>
<path fill="#8d5f4e" fill-opacity="0.7" d="M646.4,157 C650,158.6 656,158.6 661,156 C660,159.6 655,161.2 651,160.8 C648.4,160.4 646.8,159.2 646.4,157 Z"/>
<path fill="#2a1c18" fill-opacity="0.95" d="M635.6,121 C640,117.4 646.4,118 651,122.4 L650.4,125 C645.6,121.8 640,121.4 635.8,124 Z"/>
<path fill="#2a1c18" fill-opacity="0.9" d="M660.6,125.4 C666,122.6 674,123 680.6,126.4 L680,128 C674,125.6 666,125.6 661,127.4 Z"/>
<ellipse filter="url(#fb1)" cx="663" cy="108" rx="18" ry="7" fill="#fbf1ec" fill-opacity="0.6"/>
<path fill="url(#gLens)" stroke="#15100e" stroke-width="2.3" d="M625.6,126 C633,124.6 644,126 651,128.4 C651.6,136 649.4,144 643.6,146.6 C637,148.4 630.4,146.4 628,141 C626.2,136.4 625.4,131 625.6,126 Z"/>
<path fill="url(#gLens)" stroke="#15100e" stroke-width="2.3" d="M657.4,129.2 C664,127.6 674,128 681.4,130.8 C681.6,138 679.6,146 673.4,148.8 C667,150.6 660.6,148.8 658.6,143.4 C657.2,139 656.8,134 657.4,129.2 Z"/>
<path d="M650.6,129.6 C652.6,128.6 655.4,128.8 657.6,130.4" fill="none" stroke="#101012" stroke-width="2"/>
<path d="M681,131.6 C694,131.4 708,130 722.5,128.6" fill="none" stroke="#1a1210" stroke-width="2.3" stroke-linecap="round"/>
<circle cx="680.4" cy="131.6" r="0.8" fill="#c8c8c8"/><circle cx="626.6" cy="127.2" r="0.7" fill="#c8c8c8"/>
<path d="M630,130 C634,128.6 640,129 645,130.6" fill="none" stroke="#55555a" stroke-opacity="0.6" stroke-width="1.4" stroke-linecap="round"/>
<path d="M662,133 C666,131.8 672,132 677,133.6" fill="none" stroke="#55555a" stroke-opacity="0.6" stroke-width="1.4" stroke-linecap="round"/>
<path d="M646,84 C654,72 668,66 684,66" fill="none" stroke="#5c5c63" stroke-opacity="0.55" stroke-width="2.2" stroke-linecap="round"/>
<path d="M652,88 C662,76 678,71 696,72" fill="none" stroke="#5c5c63" stroke-opacity="0.5" stroke-width="2.2" stroke-linecap="round"/>
<path d="M664,90 C676,80 692,78 708,82" fill="none" stroke="#5c5c63" stroke-opacity="0.45" stroke-width="2.2" stroke-linecap="round"/>
<path d="M684,94 C696,86 710,88 722,96" fill="none" stroke="#5c5c63" stroke-opacity="0.4" stroke-width="2.2" stroke-linecap="round"/>
<path d="M700,102 C710,98 720,102 728,110" fill="none" stroke="#5c5c63" stroke-opacity="0.35" stroke-width="2.2" stroke-linecap="round"/>
<path d="M643,94 C646,86 650,80 656,75" fill="none" stroke="#5c5c63" stroke-opacity="0.4" stroke-width="2.2" stroke-linecap="round"/>
<path d="M668,63 C680,61 694,62 706,67" fill="none" stroke="#5c5c63" stroke-opacity="0.35" stroke-width="2.2" stroke-linecap="round"/>
<path d="M712,74 C720,80 727,88 731,98" fill="none" stroke="#5c5c63" stroke-opacity="0.3" stroke-width="2.2" stroke-linecap="round"/>
<path id="body" fill="#0d0d0e" d="M636.0,179.0 C633.3,179.8 626.0,182.3 620.0,184.0 C614.0,185.7 606.2,187.8 600.0,189.0 C593.8,190.2 587.6,190.5 583.0,191.5 C578.4,192.5 575.7,192.8 572.5,195.0 C569.3,197.2 566.8,200.8 564.0,205.0 C561.2,209.2 558.3,214.6 556.0,220.0 C553.7,225.4 552.0,231.2 550.0,237.5 C548.0,243.8 545.8,251.2 544.0,257.5 C542.2,263.8 540.4,269.5 539.0,275.0 C537.6,280.5 536.1,287.9 535.5,290.5 C537.2,291.5 542.2,294.6 546.0,296.5 C549.8,298.4 554.3,300.4 558.0,301.6 C561.7,302.9 565.1,303.6 568.0,304.0 C570.9,304.4 574.2,304.2 575.5,304.2 C575.8,307.8 577.4,318.5 577.4,326.0 C577.4,333.5 576.0,341.3 575.4,349.0 C574.8,356.7 574.1,362.7 574.0,372.0 C573.9,381.3 574.6,397.0 574.6,405.0 C574.6,413.0 574.6,414.0 574.0,420.0 C573.4,426.0 571.8,434.0 571.0,441.0 C570.2,448.0 569.3,456.3 569.4,462.0 C569.5,467.7 571.2,472.8 571.6,475.0 C572.8,475.2 577.4,476.2 578.5,476.5 C578.0,479.4 576.1,487.1 575.2,494.0 C574.3,500.9 573.3,514.0 572.9,518.0 C604.1,518.0 728.8,518.0 760.0,518.0 C760.1,514.5 760.2,505.7 760.6,497.0 C761.0,488.3 762.1,475.3 762.2,466.0 C762.3,456.7 761.7,449.0 761.0,441.0 C760.3,433.0 758.8,424.8 757.8,418.0 C756.8,411.2 755.1,406.8 754.8,400.0 C754.5,393.2 755.3,385.4 756.0,377.5 C756.7,369.6 757.8,360.4 758.8,352.5 C759.8,344.6 761.2,335.8 762.2,330.0 C763.2,324.2 764.5,320.0 765.0,318.0 C766.0,320.2 770.2,329.2 771.2,331.4 C774.3,330.8 783.9,329.4 790.0,328.0 C796.1,326.6 802.1,324.6 808.0,322.8 C813.9,321.0 822.3,318.3 825.2,317.4 C824.4,314.9 822.1,307.4 820.4,302.5 C818.7,297.6 816.9,293.1 815.0,288.0 C813.1,282.9 811.1,277.2 809.0,272.0 C806.9,266.8 804.7,262.2 802.5,257.0 C800.3,251.8 798.0,246.2 796.0,241.0 C794.0,235.8 792.8,230.4 790.6,226.0 C788.4,221.6 786.4,218.0 783.0,214.5 C779.6,211.0 775.2,207.8 770.5,205.0 C765.8,202.2 760.1,199.7 755.0,197.6 C749.9,195.5 744.8,194.3 740.0,192.4 C735.2,190.5 729.5,187.8 726.0,186.0 C722.5,184.2 721.1,182.6 719.0,181.4 C716.9,180.2 714.5,179.1 713.6,178.6 C714.2,180.0 717.7,183.9 717.2,187.0 C716.7,190.1 714.0,194.3 710.5,197.4 C707.0,200.5 701.8,203.9 696.0,205.6 C690.2,207.3 682.5,208.0 676.0,207.6 C669.5,207.2 662.1,205.5 657.0,203.0 C651.9,200.5 649.0,196.5 645.5,192.5 C642.0,188.5 637.6,181.2 636.0,179.0 Z"/>
<path filter="url(#fb1)" d="M726,190 C745,195 766,204 781,218 C788,228 792,240 796,252" fill="none" stroke="#2c2c2e" stroke-opacity="0.6" stroke-width="4" stroke-linecap="round"/>
<path filter="url(#fb1)" d="M600,192 C588,195 578,199 570,208" fill="none" stroke="#2c2c2e" stroke-opacity="0.7" stroke-width="4" stroke-linecap="round"/>
<path filter="url(#fb2)" d="M646,195 C656,206 676,211 696,208.5 C707,204 714,196 717,188" fill="none" stroke="#2a2a2c" stroke-opacity="0.9" stroke-width="2.2" stroke-linecap="round"/>
<path filter="url(#fb1)" d="M583,468 C620,480 700,486 757,470" fill="none" stroke="#222224" stroke-opacity="0.8" stroke-width="2.5"/>
</svg>
    <div class="abs th h1" id="l1" style="left:100.5px;top:59.5px;font-size:86.42px;line-height:86.42px;letter-spacing:6.58px;">สวัสดีครับ</div>
    <div class="abs th h1" id="l2" style="left:103px;top:173.5px;font-size:75.12px;line-height:75.12px;letter-spacing:0.33px;">ผมชื่อ</div>
    <div class="abs th h1" id="l3" style="left:314.2px;top:158px;font-size:91.23px;line-height:91.23px;letter-spacing:6.5px;transform:scaleX(1.07);transform-origin:0 0;">บาส</div>
    <div class="abs" id="bar" style="left:139px;top:253px;width:325px;height:31px;background:#000;"></div>
    <div class="abs" id="hello" style="left:152.3px;top:256px;font:700 23px/26px 'Liberation Sans',sans-serif;color:#fff;letter-spacing:2.65px;white-space:nowrap;">Hello, my name is Bas.</div>
    <div class="abs th" id="bt" style="left:109.7px;top:306.5px;font-size:10.6px;line-height:15px;font-weight:700;letter-spacing:0.364px;">กราฟิกดีไซเนอร์มากประสบการณ์กว่า 10 ปี</div>
    <div class="abs th bd" id="b1" style="left:109.6px;top:323px;letter-spacing:-0.212px;">มีประสบการณ์ทำงานด้านกราฟิกดีไซน์ในหลากหลายธุรกิจ ตั้งแต่บริษัทขนาดเล็กจนถึงระดับกลาง</div>
    <div class="abs th bd" id="b2" style="left:109.6px;top:338.3px;letter-spacing:-0.226px;">เชี่ยวชาญด้านการออกแบบสื่อโฆษณา (Ads), ป้าย, และบรรจุภัณฑ์ (Packaging) ที่ได้รับการผลิต</div>
    <div class="abs th bd" id="b3" style="left:109.6px;top:353.6px;letter-spacing:-0.25px;">และจำหน่ายจริง เข้าใจหลักการออกแบบ การใช้สี และการควบคุม CI (Corporate Identity)</div>
    <div class="abs th bd" id="b4" style="left:109.6px;top:368.8px;letter-spacing:-0.268px;">ให้สอดคล้องกับภาพลักษณ์แบรนด์ มุ่งเน้นการสร้างสรรค์ผลงานที่โดดเด่นและสื่อสารได้อย่างมี</div>
    <div class="abs th bd" id="b5" style="left:109.6px;top:384px;letter-spacing:-0.212px;">ประสิทธิภาพ พร้อมปรับตัวให้เข้ากับเทรนด์ใหม่ ๆ ในวงการดีไซน์เพื่อสร้างคุณค่าให้กับธุรกิจ</div>
</div>
<div id="status" class="abs">
<div class="abs" style="left:0px;top:0px;width:894px;height:0.8px;background:#3f3f3f;"></div>
<div class="abs" style="left:3.2px;top:2.2px;width:7px;height:7px;background:#cfcfcf;border-radius:50%;"></div>
<div class="abs ui" style="left:5.3px;top:2.4px;font-size:5.6px;line-height:7.0px;font-weight:700;color:#4d4d4d;letter-spacing:0px;">?</div>
<div class="abs ui" style="left:17.0px;top:2.1px;font-size:6.1px;line-height:7.62px;font-weight:400;color:#dedede;letter-spacing:-0.269px;">Click the object to select</div>
<div class="abs ui" style="left:80.0px;top:2.1px;font-size:6.1px;line-height:7.62px;font-weight:400;color:#dedede;letter-spacing:0px;">|</div>
<div class="abs ui" style="left:84.7px;top:2.1px;font-size:6.1px;line-height:7.62px;font-weight:700;color:#dedede;letter-spacing:-0.267px;">Shift+Click</div>
<div class="abs ui" style="left:115.8px;top:2.1px;font-size:6.1px;line-height:7.62px;font-weight:400;color:#dedede;letter-spacing:-0.327px;">to select multiple object</div>
<div class="abs ui" style="left:175.6px;top:2.1px;font-size:6.1px;line-height:7.62px;font-weight:400;color:#dedede;letter-spacing:0px;">|</div>
<div class="abs ui" style="left:180.3px;top:2.1px;font-size:6.1px;line-height:7.62px;font-weight:700;color:#dedede;letter-spacing:-0.225px;">Alt+Drag</div>
<div class="abs ui" style="left:206.3px;top:2.1px;font-size:6.1px;line-height:7.62px;font-weight:400;color:#dedede;letter-spacing:-0.286px;">the object to duplicate</div>
<div class="abs" style="left:0px;top:12.6px;width:894px;height:12px;background:#4d4d4d;"></div>
<div class="abs" style="left:2.6px;top:13.2px;width:35.6px;height:8.2px;background:#424242;"></div>
<div class="abs ui" style="left:4.3px;top:13.4px;font-size:5.8px;line-height:7.25px;font-weight:400;color:#e0e0e0;letter-spacing:-0.734px;">66.67%</div>
<svg class="abs" style="left:31.0px;top:15.6px;" width="4" height="2.4" viewBox="0 0 4 2.4"><path d="M0.4,0.4 L2.0,1.7999999999999998 L3.6,0.4" fill="none" stroke="#e0e0e0" stroke-width="1.1"/></svg>
<div class="abs" style="left:41.6px;top:13.2px;width:35.6px;height:8.2px;background:#424242;"></div>
<div class="abs ui" style="left:43.7px;top:13.4px;font-size:5.8px;line-height:7.25px;font-weight:400;color:#e0e0e0;letter-spacing:-0.747px;">0°</div>
<svg class="abs" style="left:70.7px;top:15.6px;" width="4" height="2.4" viewBox="0 0 4 2.4"><path d="M0.4,0.4 L2.0,1.7999999999999998 L3.6,0.4" fill="none" stroke="#e0e0e0" stroke-width="1.1"/></svg>
<svg class="abs" style="left:82.0px;top:14.6px;" width="5" height="4.4" viewBox="0 0 5 4.4"><rect x="0" y="0" width="1" height="4.4" fill="#6c6c6c"/><path d="M4.6,0 L1.4,2.2 L4.6,4.4 Z" fill="#6c6c6c"/></svg>
<svg class="abs" style="left:91.5px;top:14.6px;" width="5" height="4.4" viewBox="0 0 5 4.4"><path d="M4,0 L0.8,2.2 L4,4.4 Z" fill="#6c6c6c"/></svg>
<div class="abs" style="left:98.7px;top:13.2px;width:31.6px;height:8.2px;background:#424242;"></div>
<div class="abs ui" style="left:101.3px;top:13.4px;font-size:5.8px;line-height:7.25px;font-weight:400;color:#e0e0e0;letter-spacing:0px;">1</div>
<svg class="abs" style="left:123.3px;top:15.6px;" width="4" height="2.4" viewBox="0 0 4 2.4"><path d="M0.4,0.4 L2.0,1.7999999999999998 L3.6,0.4" fill="none" stroke="#e0e0e0" stroke-width="1.1"/></svg>
<svg class="abs" style="left:135.5px;top:14.6px;" width="5" height="4.4" viewBox="0 0 5 4.4"><path d="M0.8,0 L4,2.2 L0.8,4.4 Z" fill="#6c6c6c"/></svg>
<svg class="abs" style="left:143.5px;top:14.6px;" width="5" height="4.4" viewBox="0 0 5 4.4"><path d="M0.2,0 L3.4,2.2 L0.2,4.4 Z" fill="#6c6c6c"/><rect x="3.8" y="0" width="1" height="4.4" fill="#6c6c6c"/></svg>
<div class="abs ui" style="left:195.3px;top:13.4px;font-size:5.8px;line-height:7.25px;font-weight:400;color:#dcdcdc;letter-spacing:-0.357px;">Selection</div>
<svg class="abs" style="left:261.5px;top:14.600000000000023px" width="3" height="4.4" viewBox="0 0 3 4.4"><path d="M0,0 L3,2.2 L0,4.4 Z" fill="#e4e4e4"/></svg>
<svg class="abs" style="left:271.0px;top:14.6px;" width="2.2" height="4" viewBox="0 0 2.2 4"><path d="M1.8000000000000003,0.4 L0.6,2.0 L1.8000000000000003,3.6" fill="none" stroke="#6a6a6a" stroke-width="1.1"/></svg>
<div class="abs" style="left:276px;top:13px;width:608px;height:8.2px;background:#484848;"></div>
<div class="abs" style="left:520px;top:14px;width:14px;height:5.4px;background:#6a6a6a;border-radius:2.7px;"></div>
<svg class="abs" style="left:877.8px;top:14.2px;" width="2.2" height="4" viewBox="0 0 2.2 4"><path d="M0.4,0.4 L1.6,2.0 L0.4,3.6" fill="none" stroke="#a8a8a8" stroke-width="1.1"/></svg>
<div class="abs" style="left:-23px;top:21.2px;width:960px;height:1.1px;background:#2e2e2e;"></div>
<div class="abs" style="left:-23px;top:22.3px;width:960px;height:2px;background:#e9e9e9;"></div>
</div>
<div id="rpanel" class="abs">
<div class="abs" style="left:0px;top:14px;width:9px;height:479px;background:#4a4a4a;"></div>
<svg class="abs" style="left:2.5px;top:16.8px;" width="4.4" height="2.4" viewBox="0 0 4.4 2.4"><path d="M0.4,2.0 L2.2,0.6 L4.0,2.0" fill="none" stroke="#b8b8b8" stroke-width="1.1"/></svg>
<svg class="abs" style="left:2.5px;top:485.1px;" width="4.4" height="2.4" viewBox="0 0 4.4 2.4"><path d="M0.4,0.4 L2.2,1.7999999999999998 L4.0,0.4" fill="none" stroke="#b8b8b8" stroke-width="1.1"/></svg>
<div class="abs" style="left:1.6px;top:246px;width:6.2px;height:13.5px;background:#696969;border-radius:3px;"></div>
<div class="abs" style="left:9px;top:0px;width:1.2px;height:503px;background:#383838;"></div>
<div class="abs" style="left:10.2px;top:0px;width:19.6px;height:503px;background:#535353;"></div>
<div class="abs" style="left:29.8px;top:0px;width:1.2px;height:503px;background:#383838;"></div>
<div class="abs" style="left:31px;top:0px;width:19.3px;height:503px;background:#535353;"></div>
<div class="abs" style="left:50.3px;top:0px;width:2.7px;height:503px;background:#3c3c3c;"></div>
<div class="abs" style="left:10.2px;top:0px;width:19.6px;height:6.5px;background:#424242;"></div>
<div class="abs" style="left:31px;top:0px;width:19.3px;height:6.5px;background:#424242;"></div>
<div class="abs" style="left:23.100000000000023px;top:2.2px;width:1.2px;height:1.6px;background:#d0d0d0;"></div>
<div class="abs" style="left:25.100000000000023px;top:2.2px;width:1.2px;height:1.6px;background:#d0d0d0;"></div>
<div class="abs" style="left:44.10000000000002px;top:2.2px;width:1.2px;height:1.6px;background:#d0d0d0;"></div>
<div class="abs" style="left:46.10000000000002px;top:2.2px;width:1.2px;height:1.6px;background:#d0d0d0;"></div>
<div class="abs" style="left:15.8px;top:8.6px;width:8px;height:0;border-top:1px dotted #6e6e6e;"></div>
<div class="abs" style="left:36.6px;top:8.6px;width:8px;height:0;border-top:1px dotted #6e6e6e;"></div>
<div class="abs" style="left:10.2px;top:41.9px;width:19.6px;height:1px;background:#3a3a3a;"></div><div class="abs" style="left:15.8px;top:44.7px;width:8px;height:0;border-top:1px dotted #6e6e6e;"></div>
<div class="abs" style="left:10.2px;top:93.0px;width:19.6px;height:1px;background:#3a3a3a;"></div><div class="abs" style="left:15.8px;top:95.8px;width:8px;height:0;border-top:1px dotted #6e6e6e;"></div>
<div class="abs" style="left:10.2px;top:143.0px;width:19.6px;height:1px;background:#3a3a3a;"></div><div class="abs" style="left:15.8px;top:145.8px;width:8px;height:0;border-top:1px dotted #6e6e6e;"></div>
<div class="abs" style="left:10.2px;top:164.8px;width:19.6px;height:1px;background:#3a3a3a;"></div><div class="abs" style="left:15.8px;top:167.6px;width:8px;height:0;border-top:1px dotted #6e6e6e;"></div>
<div class="abs" style="left:10.2px;top:214.0px;width:19.6px;height:1px;background:#3a3a3a;"></div>
<div class="abs" style="left:31.0px;top:26.3px;width:19.3px;height:1px;background:#3a3a3a;"></div><div class="abs" style="left:36.6px;top:29.1px;width:8px;height:0;border-top:1px dotted #6e6e6e;"></div>
<div class="abs" style="left:31.0px;top:78.6px;width:19.3px;height:1px;background:#3a3a3a;"></div><div class="abs" style="left:36.6px;top:81.4px;width:8px;height:0;border-top:1px dotted #6e6e6e;"></div>
<div class="abs" style="left:31.0px;top:127.4px;width:19.3px;height:1px;background:#3a3a3a;"></div><div class="abs" style="left:36.6px;top:130.2px;width:8px;height:0;border-top:1px dotted #6e6e6e;"></div>
<div class="abs" style="left:31.0px;top:164.8px;width:19.3px;height:1px;background:#3a3a3a;"></div><div class="abs" style="left:36.6px;top:167.6px;width:8px;height:0;border-top:1px dotted #6e6e6e;"></div>
<div class="abs" style="left:31.0px;top:184.8px;width:19.3px;height:1px;background:#3a3a3a;"></div>
<svg class="abs" style="left:14.0px;top:11.4px;" width="12" height="12" viewBox="0 0 12 12"><path d="M6,1.4 C2.6,1.4 0.6,3.6 0.6,6 C0.6,8.6 3,10.4 5.4,10.4 C6.8,10.4 6.4,8.8 7.6,8.4 C9,8 11.4,8.6 11.4,5.8 C11.4,3.2 9,1.4 6,1.4 Z" fill="#d8d8d8"/><circle cx="3.4" cy="5" r="1" fill="#535353"/><circle cx="5.6" cy="3.4" r="1" fill="#535353"/><circle cx="8.4" cy="4" r="1" fill="#535353"/><circle cx="4.2" cy="7.8" r="1.1" fill="#535353"/></svg>
<svg class="abs" style="left:14.0px;top:27.4px;" width="12" height="12" viewBox="0 0 12 12"><defs><linearGradient id="pg1" x1="0" y1="1" x2="1" y2="0"><stop offset="0" stop-color="#f2f2f2"/><stop offset="1" stop-color="#6a6a6a"/></linearGradient></defs><path d="M1.4,1 C6.6,1.4 10.6,5.2 11,11 H1.4 Z" fill="url(#pg1)" stroke="#d8d8d8" stroke-width="0.8"/></svg>
<svg class="abs" style="left:14.0px;top:47.4px;" width="12" height="12" viewBox="0 0 12 12"><rect x="0.8" y="2" width="10.4" height="8" fill="#d8d8d8"/><rect x="2" y="3.2" width="2" height="2" fill="#5a5a5a"/><rect x="2" y="6.4" width="2" height="2" fill="#5a5a5a"/><rect x="5" y="3.2" width="2" height="2" fill="#5a5a5a"/><rect x="5" y="6.4" width="2" height="2" fill="#5a5a5a"/><rect x="8" y="3.2" width="2" height="2" fill="#5a5a5a"/><rect x="8" y="6.4" width="2" height="2" fill="#5a5a5a"/></svg>
<svg class="abs" style="left:14.0px;top:62.6px;" width="12" height="12" viewBox="0 0 12 12"><path d="M3.2,6 H9 L8.4,11.2 H3.8 Z" fill="#d8d8d8"/><path d="M4.4,6 L3,1 M6,6 V0.6 M7.6,6 L9.4,1.6" stroke="#d8d8d8" stroke-width="1.3"/><circle cx="9.6" cy="1.6" r="1" fill="#d8d8d8"/></svg>
<svg class="abs" style="left:14.0px;top:78.0px;" width="12" height="12" viewBox="0 0 12 12"><circle cx="6" cy="3.2" r="2.5" fill="#d8d8d8"/><circle cx="3.2" cy="6.4" r="2.5" fill="#d8d8d8"/><circle cx="8.8" cy="6.4" r="2.5" fill="#d8d8d8"/><path d="M6,5 L7.4,11 H4.6 Z" fill="#d8d8d8"/></svg>
<svg class="abs" style="left:14.0px;top:98.5px;" width="12" height="12" viewBox="0 0 12 12"><rect x="0.8" y="1.2" width="10.4" height="1.4" fill="#d8d8d8"/><rect x="0.8" y="4.4" width="10.4" height="2.2" fill="#d8d8d8"/><rect x="0.8" y="8.2" width="10.4" height="2.8" fill="#d8d8d8"/></svg>
<svg class="abs" style="left:14.0px;top:113.0px;" width="12" height="12" viewBox="0 0 12 12"><defs><linearGradient id="pg2" x1="0" y1="0" x2="1" y2="0"><stop offset="0" stop-color="#2e2e2e"/><stop offset="1" stop-color="#f4f4f4"/></linearGradient></defs><rect x="1" y="2.4" width="10" height="7.4" fill="url(#pg2)" stroke="#d8d8d8" stroke-width="0.8"/></svg>
<svg class="abs" style="left:14.0px;top:128.0px;" width="12" height="12" viewBox="0 0 12 12"><circle cx="4.6" cy="4.8" r="3.8" fill="#c9c9c9"/><circle cx="7.4" cy="7.2" r="3.8" fill="#9f9f9f" fill-opacity="0.85" stroke="#d8d8d8" stroke-width="0.5"/></svg>
<svg class="abs" style="left:14.0px;top:149.0px;" width="12" height="12" viewBox="0 0 12 12"><rect x="3" y="1.4" width="7.8" height="7.4" fill="none" stroke="#d8d8d8" stroke-width="1.1"/><circle cx="3.6" cy="8.4" r="2.3" fill="#535353" stroke="#d8d8d8" stroke-width="1"/><circle cx="3.6" cy="8.4" r="0.9" fill="#d8d8d8"/></svg>
<svg class="abs" style="left:14.0px;top:170.3px;" width="12" height="12" viewBox="0 0 12 12"><rect x="2.2" y="2.2" width="7.6" height="7.6" fill="none" stroke="#d8d8d8" stroke-width="0.9" stroke-dasharray="1.2 1"/><rect x="1" y="1" width="2.4" height="2.4" fill="#d8d8d8"/><rect x="1" y="8.6" width="2.4" height="2.4" fill="#d8d8d8"/><rect x="8.6" y="1" width="2.4" height="2.4" fill="#d8d8d8"/><rect x="8.6" y="8.6" width="2.4" height="2.4" fill="#d8d8d8"/></svg>
<svg class="abs" style="left:14.0px;top:185.2px;" width="12" height="12" viewBox="0 0 12 12"><rect x="1.6" y="0.8" width="1.2" height="10.4" fill="#d8d8d8"/><rect x="3.6" y="2" width="4" height="3.2" fill="#d8d8d8"/><rect x="3.6" y="6.8" width="7" height="3.2" fill="#d8d8d8"/></svg>
<svg class="abs" style="left:14.0px;top:199.7px;" width="12" height="12" viewBox="0 0 12 12"><rect x="1.4" y="1.4" width="6" height="6" fill="#d8d8d8"/><rect x="4.6" y="4.6" width="6" height="6" fill="#8a8a8a" stroke="#d8d8d8" stroke-width="0.9"/></svg>
<svg class="abs" style="left:34.8px;top:11.4px;" width="12" height="12" viewBox="0 0 12 12"><path d="M2,1.2 L11,6 L2,10.8 Z" fill="#d8d8d8"/></svg>
<svg class="abs" style="left:34.8px;top:32.6px;" width="12" height="12" viewBox="0 0 12 12"><rect x="0.8" y="3.6" width="6" height="4.8" rx="2.4" fill="none" stroke="#d8d8d8" stroke-width="1.4"/><rect x="5.2" y="3.6" width="6" height="4.8" rx="2.4" fill="none" stroke="#d8d8d8" stroke-width="1.4"/></svg>
<svg class="abs" style="left:34.8px;top:47.0px;" width="12" height="12" viewBox="0 0 12 12"><path d="M1.4,1.6 H8.6 L10.6,3.6 V10.6 H1.4 Z" fill="none" stroke="#d8d8d8" stroke-width="1.3"/><rect x="3.6" y="1.6" width="4" height="3.4" fill="#d8d8d8"/><path d="M4,8.4 L6,6 L8,8.4 Z" fill="#d8d8d8"/></svg>
<svg class="abs" style="left:34.8px;top:62.6px;" width="12" height="12" viewBox="0 0 12 12"><path d="M2,0.8 H7.6 L10,3.2 V11.2 H2 Z" fill="#d8d8d8"/><circle cx="6" cy="7" r="2.2" fill="#535353"/><rect x="5.5" y="5.8" width="1" height="2.4" fill="#d8d8d8"/></svg>
<svg class="abs" style="left:34.8px;top:84.5px;" width="12" height="12" viewBox="0 0 12 12"><circle cx="4" cy="7.6" r="2.5" fill="none" stroke="#d8d8d8" stroke-width="1.8" stroke-dasharray="1.5 0.9"/><circle cx="8.6" cy="3.6" r="1.9" fill="none" stroke="#d8d8d8" stroke-width="1.5" stroke-dasharray="1.2 0.8"/></svg>
<svg class="abs" style="left:34.8px;top:98.5px;" width="12" height="12" viewBox="0 0 12 12"><circle cx="6" cy="6" r="3.2" fill="#d8d8d8"/><circle cx="6" cy="6" r="4.8" fill="none" stroke="#d8d8d8" stroke-width="1.4" stroke-dasharray="0.9 1"/></svg>
<svg class="abs" style="left:34.8px;top:113.0px;" width="12" height="12" viewBox="0 0 12 12"><path d="M5.6,2.4 H1.4 V10.6 H9.6 V6.4" fill="none" stroke="#d8d8d8" stroke-width="1.2"/><path d="M6.6,1 H11 V5.4 M11,1 L5.6,6.4" fill="none" stroke="#d8d8d8" stroke-width="1.3"/></svg>
<svg class="abs" style="left:34.8px;top:134.8px;" width="12" height="12" viewBox="0 0 12 12"><path d="M6,0.8 L11.2,3.8 L6,6.8 L0.8,3.8 Z" fill="#d8d8d8"/><path d="M1.4,6.4 L6,9 L10.6,6.4" fill="none" stroke="#d8d8d8" stroke-width="1.3"/></svg>
<svg class="abs" style="left:34.8px;top:149.7px;" width="12" height="12" viewBox="0 0 12 12"><rect x="1" y="1" width="6.6" height="6.6" fill="none" stroke="#d8d8d8" stroke-width="1.1"/><rect x="4" y="4.6" width="7" height="6" fill="#535353" stroke="#d8d8d8" stroke-width="1.1"/></svg>
<svg class="abs" style="left:34.8px;top:170.3px;" width="12" height="12" viewBox="0 0 12 12"><path d="M1.6,10.4 L8,4" stroke="#d8d8d8" stroke-width="1.4"/><path d="M2,2 L10,10 M6,1 V3.4 M10.6,5.8 H8.4 M9.8,2 L8.4,3.4" stroke="#d8d8d8" stroke-width="0.9" stroke-dasharray="1.2 0.8"/></svg>
<div class="abs" style="left:-907px;top:500.2px;width:960px;height:1.1px;background:#2e2e2e;"></div>
<div class="abs" style="left:-907px;top:501.3px;width:960px;height:2px;background:#e9e9e9;"></div>
</div>
<div id="fbar" class="abs" style="left:701px;top:497.3px;width:205px;height:16px;background:#535353;border-radius:2px;box-shadow:0 0 0 0.6px #3a3a3a, 0 1px 3px rgba(0,0,0,.45);">
<div class="abs" style="left:2.8px;top:2.6px;width:1.9px;height:11px;background:#9c9c9c;border-radius:0.9px;"></div>
<div class="abs" style="left:9.7px;top:2.5px;width:63.6px;height:10.8px;border:0.7px solid #6c6c6c;border-radius:1.2px;"></div>
<svg class="abs" style="left:15.5px;top:4.4px;" width="8.5" height="8.5" viewBox="0 0 17 17"><path d="M1,16 L2.2,11.5 L11.5,2.2 L14.8,5.5 L5.5,14.8 Z M12.6,1.1 L13.6,0.2 a1,1 0 0 1 1.4,0 L16.8,2 a1,1 0 0 1 0,1.4 L15.9,4.4 Z" fill="#d8d8d8"/></svg>
<div class="abs ui" style="left:28.0px;top:4.7px;font-size:6.2px;line-height:7.75px;font-weight:400;color:#ececec;letter-spacing:0.263px;">Draw (Pencil)</div>
<div class="abs" style="left:76.7px;top:2.5px;width:92.3px;height:10.8px;border:0.7px solid #6c6c6c;border-radius:1.2px;"></div>
<svg class="abs" style="left:82.0px;top:4.1px;" width="7.789999999999999" height="7.789999999999999" viewBox="0 0 19 19"><path d="M10,3.5 H3.5 a1.5,1.5 0 0 0 -1.5,1.5 V15.5 a1.5,1.5 0 0 0 1.5,1.5 H14 a1.5,1.5 0 0 0 1.5,-1.5 V9.5" fill="none" stroke="#e8e8e8" stroke-width="2"/><rect x="6" y="8.5" width="5" height="5" fill="#e8e8e8"/><path d="M15,0 L16.1,2.9 L19,4 L16.1,5.1 L15,8 L13.9,5.1 L11,4 L13.9,2.9 Z" fill="#e8e8e8"/></svg>
<div class="abs ui" style="left:93.0px;top:4.7px;font-size:6.2px;line-height:7.75px;font-weight:400;color:#ececec;letter-spacing:0.239px;">Generate Vectors (Beta)</div>
<svg class="abs" style="left:174.5px;top:5.0px;" width="8.5" height="8" viewBox="0 0 17 16"><path d="M9,14 H2.5 a1.5,1.5 0 0 1 -1.5,-1.5 V3.5 a1.5,1.5 0 0 1 1.5,-1.5 H13.5 a1.5,1.5 0 0 1 1.5,1.5 V7" fill="none" stroke="#e4e4e4" stroke-width="1.8"/><path d="M2.5,12.5 L6,8 L9,11.5 Z" fill="#e4e4e4"/><circle cx="13" cy="12" r="3.2" fill="none" stroke="#e4e4e4" stroke-width="1.8"/></svg>
<div class="abs" style="left:190.5px;top:7.899999999999977px;width:1.6px;height:1.6px;background:#e6e6e6;border-radius:50%;"></div>
<div class="abs" style="left:193.79999999999995px;top:7.899999999999977px;width:1.6px;height:1.6px;background:#e6e6e6;border-radius:50%;"></div>
<div class="abs" style="left:197.10000000000002px;top:7.899999999999977px;width:1.6px;height:1.6px;background:#e6e6e6;border-radius:50%;"></div>
</div>
</div>
<script>
(function(){
  /* keeps the Thai text blocks at their designed widths if a different fallback font is used */
  var W={l1:408.28,l2:186.02,l3:178.95,bt:201.86,b1:347.38,b2:343.8,b3:319.73,b4:333.22,b5:325.3};
  var B={l3:1.07};
  function fit(){
    for(var k in W){
      var e=document.getElementById(k); if(!e) continue;
      e.style.transform='none';
      var w=e.getBoundingClientRect().width; if(!w) continue;
      var r=W[k]/w; if(Math.abs(r-1)<0.012) r=1;
      var sc=(B[k]||1)*r;
      e.style.transformOrigin='0 0';
      e.style.transform=(sc===1)?'none':'scaleX('+sc.toFixed(4)+')';
    }
  }
  fit();
  if(document.fonts&&document.fonts.ready){document.fonts.ready.then(fit);}
})();
</script>
</body>
</html>
